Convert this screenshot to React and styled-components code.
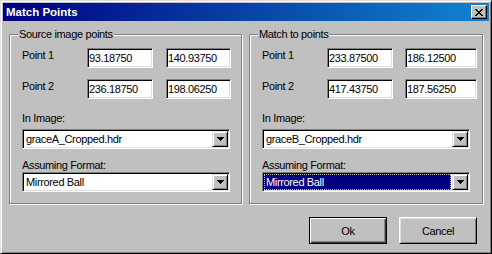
import styled, { createGlobalStyle, css } from "styled-components";

const GlobalStyle = createGlobalStyle`
  html, body {
    margin: 0;
    padding: 0;
    background: #c0c0c0;
  }
  body {
    font-family: "Liberation Sans", Arial, sans-serif;
    font-size: 11px;
    letter-spacing: -0.35px;
    color: #000;
  }
`;

const groups = [
  {
    title: "Source image points",
    gap: 13,
    w2: 65,
    points: [
      ["93.18750", "140.93750"],
      ["236.18750", "198.06250"],
    ],
    image: "graceA_Cropped.hdr",
    format: "Mirrored Ball",
    focused: false,
  },
  {
    title: "Match to points",
    gap: 12,
    w2: 72,
    points: [
      ["233.87500", "186.12500"],
      ["417.43750", "187.56250"],
    ],
    image: "graceB_Cropped.hdr",
    format: "Mirrored Ball",
    focused: true,
  },
];

function CloseGlyph() {
  // 8x7 pixel X like the classic caption button
  const rows = ["XX....XX", ".XX..XX.", "..XXXX..", "...XX...", "..XXXX..", ".XX..XX.", "XX....XX"];
  return (
    <svg width="8" height="7" viewBox="0 0 8 7" shapeRendering="crispEdges">
      {rows.map((r, y) =>
        r.split("").map((c, x) => (c === "X" ? <rect key={`${x}-${y}`} x={x} y={y} width="1" height="1" fill="#000" /> : null))
      )}
    </svg>
  );
}

function Arrow() {
  return (
    <svg width="7" height="4" viewBox="0 0 7 4" shapeRendering="crispEdges">
      <path d="M0 0h7v1H6v1H5v1H4v1H3V3H2V2H1V1H0z" fill="#000" />
    </svg>
  );
}

function Dropdown({ value, focused }) {
  return (
    <Combo>
      <ComboText $selected={focused}>{value}</ComboText>
      <ComboButton>
        <Arrow />
      </ComboButton>
    </Combo>
  );
}

export default function App() {
  return (
    <>
      <GlobalStyle />
      <Window>
        <TitleBar>
          <span>Match Points</span>
          <CloseButton>
            <CloseGlyph />
          </CloseButton>
        </TitleBar>
        <Groups>
          {groups.map((g) => (
            <Group key={g.title}>
              <Legend>{g.title}</Legend>
              <GroupBody>
                {g.points.map((p, i) => (
                  <PointRow key={i}>
                    <Label>Point {i + 1}</Label>
                    <TextBox $w={66}>{p[0]}</TextBox>
                    <TextBox $w={g.w2} $left={g.gap}>
                      {p[1]}
                    </TextBox>
                  </PointRow>
                ))}
                <Caption $top={12}>In Image:</Caption>
                <ComboWrap $top={4}>
                  <Dropdown value={g.image} />
                </ComboWrap>
                <Caption $top={9}>Assuming Format:</Caption>
                <ComboWrap $top={0}>
                  <Dropdown value={g.format} focused={g.focused} />
                </ComboWrap>
              </GroupBody>
            </Group>
          ))}
        </Groups>
        <Footer>
          <Button $default>Ok</Button>
          <Button>Cancel</Button>
        </Footer>
      </Window>
    </>
  );
}

const Window = styled.div`
  width: 492px;
  height: 254px;
  box-sizing: border-box;
  background: #c0c0c0;
  border: 1px solid;
  border-color: #dfdfdf #000 #000 #dfdfdf;
  box-shadow: inset 1px 1px #fff, inset -1px -1px #808080;
  padding: 2px;
  display: flex;
  flex-direction: column;
`;

const TitleBar = styled.div`
  height: 18px;
  flex: none;
  display: flex;
  align-items: center;
  justify-content: space-between;
  padding: 0 2px 0 3px;
  background: linear-gradient(to right, #000080, #1084d0);
  color: #fff;
  font-weight: bold;
  font-size: 11.5px;
  letter-spacing: 0;
`;

const CloseButton = styled.div`
  width: 16px;
  height: 14px;
  box-sizing: border-box;
  background: #c0c0c0;
  border: 1px solid;
  border-color: #fff #000 #000 #fff;
  box-shadow: inset -1px -1px #808080;
  display: flex;
  align-items: center;
  justify-content: center;
`;

const Groups = styled.div`
  display: grid;
  grid-template-columns: 233px 234px;
  column-gap: 7px;
  margin-top: 7px;
  padding-left: 6px;
`;

const Group = styled.fieldset`
  margin: 0;
  min-width: 0;
  padding: 7px 0 11px 0;
  border: 1px solid #808080;
  box-shadow: 1px 1px 0 #fff, inset 1px 1px 0 #fff;
`;

const Legend = styled.legend`
  margin-left: 8px;
  padding: 0 1px;
  line-height: 13px;
  background: #c0c0c0;
`;

const GroupBody = styled.div`
  padding-left: 12px;
`;

const PointRow = styled.div`
  display: flex;
  height: 20px;
  & + & {
    margin-top: 11px;
  }
`;

const Label = styled.div`
  width: 65px;
  flex: none;
  line-height: 14px;
`;

const TextBox = styled.div`
  width: ${(p) => p.$w}px;
  margin-left: ${(p) => p.$left || 0}px;
  flex: none;
  height: 20px;
  box-sizing: border-box;
  background: #fff;
  border: 1px solid;
  border-color: #808080 #fff #fff #808080;
  box-shadow: inset 1px 1px #000, inset -1px -1px #dfdfdf;
  padding: 0 1px;
  line-height: 18px;
  white-space: nowrap;
  overflow: hidden;
`;

const Caption = styled.div`
  margin-top: ${(p) => p.$top}px;
  line-height: 14px;
`;

const ComboWrap = styled.div`
  margin-top: ${(p) => p.$top}px;
`;

const Combo = styled.div`
  width: 208px;
  height: 20px;
  box-sizing: border-box;
  display: flex;
  background: #fff;
  border: 1px solid;
  border-color: #808080 #fff #fff #808080;
  box-shadow: inset 1px 1px #000, inset -1px -1px #dfdfdf;
  padding: 1px;
`;

const ComboText = styled.div`
  flex: 1;
  margin-right: 1px;
  padding: 0 2px;
  line-height: 16px;
  white-space: nowrap;
  ${(p) =>
    p.$selected &&
    css`
      background: #000080;
      color: #fff;
      outline: 1px dotted #c0c0c0;
      outline-offset: -1px;
    `}
`;

const ComboButton = styled.div`
  width: 16px;
  height: 16px;
  flex: none;
  box-sizing: border-box;
  background: #c0c0c0;
  border: 1px solid;
  border-color: #dfdfdf #000 #000 #dfdfdf;
  box-shadow: inset 1px 1px #fff, inset -1px -1px #808080;
  display: flex;
  align-items: center;
  justify-content: center;
`;

const Footer = styled.div`
  display: flex;
  justify-content: flex-end;
  gap: 12px;
  margin-top: 13px;
  padding-right: 12px;
`;

const Button = styled.button`
  width: 78px;
  height: 27px;
  box-sizing: border-box;
  padding: 0;
  font: inherit;
  letter-spacing: inherit;
  color: #000;
  background: #c0c0c0;
  border: 1px solid;
  border-color: #fff #000 #000 #fff;
  box-shadow: inset 1px 1px #dfdfdf, inset -1px -1px #808080;
  ${(p) =>
    p.$default &&
    css`
      border-color: #000;
      box-shadow: inset 1px 1px #fff, inset -1px -1px #404040, inset -2px -2px #808080;
    `}
`;
